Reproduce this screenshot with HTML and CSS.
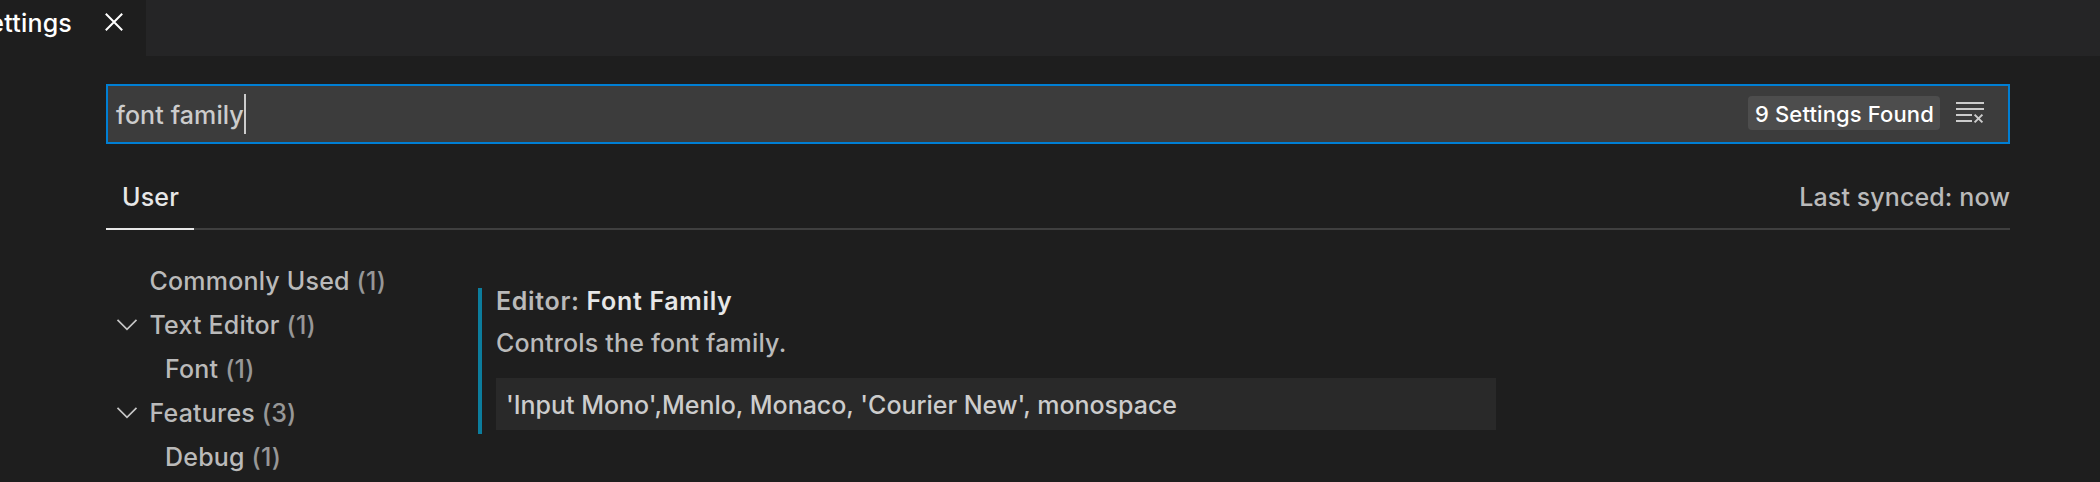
FILE: index.html
```
<!DOCTYPE html>
<html lang="en">
<head>
<meta charset="utf-8">
<title>Settings</title>
<link rel="stylesheet" href="styles.css">
</head>
<body>
<header class="tabs">
  <div class="tab">
    <span class="tab-label">Settings</span>
    <svg class="tab-close" width="20" height="20" viewBox="0 0 20 20"><path d="M1.8 1.8 18.2 18.2M18.2 1.8 1.8 18.2"/></svg>
  </div>
</header>
<main class="settings">
  <div class="search">
    <span class="query">font family</span>
    <span class="caret"></span>
    <span class="badge">9 Settings Found</span>
    <svg class="clear" width="28" height="22" viewBox="0 0 28 22"><path class="lines" d="M0 1H28M0 7H28M0 13H16M0 19H16"/><path class="cross" d="M18.6 12.6 26.4 20.4M26.4 12.6 18.6 20.4"/></svg>
  </div>
  <div class="scopes">
    <div class="scope">User</div>
    <div class="sync">Last synced: now</div>
  </div>
  <div class="content">
    <nav class="toc">
      <div class="row">Commonly Used <span class="count">(1)</span></div>
      <div class="row parent"><svg class="chevron" width="22" height="14" viewBox="0 0 22 14"><path d="M1.5 1.8 11 11.3 20.5 1.8"/></svg>Text Editor <span class="count">(1)</span></div>
      <div class="row child">Font <span class="count">(1)</span></div>
      <div class="row parent"><svg class="chevron" width="22" height="14" viewBox="0 0 22 14"><path d="M1.5 1.8 11 11.3 20.5 1.8"/></svg>Features <span class="count">(3)</span></div>
      <div class="row child">Debug <span class="count">(1)</span></div>
    </nav>
    <section class="setting">
      <h2 class="title"><span class="category">Editor: </span>Font Family</h2>
      <p class="description">Controls the font family.</p>
      <div class="value">'Input Mono',Menlo, Monaco, 'Courier New', monospace</div>
    </section>
  </div>
</main>
</body>
</html>
```
FILE: styles.css
```
* { box-sizing: border-box; }
body {
  margin: 0;
  height: 482px;
  overflow: hidden;
  background: #1e1e1e;
  color: #bababa;
  font: 450 25px/44px Inter, "Liberation Sans", sans-serif;
  letter-spacing: 0.2px;
  -webkit-font-smoothing: antialiased;
}
.tabs, .tab, .settings, .search, .scopes, .content, .setting { display: flex; }
.tabs { height: 56px; background: #252526; }
.tab {
  width: 146px;
  padding: 1px 22px 0 0;
  justify-content: flex-end;
  overflow: hidden;
  background: #1e1e1e;
  color: #fff;
}
.tab-label { flex: none; }
.tab-close { flex: none; margin: 11px 0 0 32px; fill: none; stroke: #fff; stroke-width: 2; }
.settings { flex-direction: column; padding: 28px 90px 0 106px; }
.search {
  height: 60px;
  padding: 0 24px 0 8px;
  border: 2px solid #007fd4;
  background: #3c3c3c;
  color: #ccc;
  align-items: flex-start;
}
.query { width: 127px; padding-top: 7px; letter-spacing: 0.1px; white-space: nowrap; }
.caret { width: 2px; height: 40px; margin: 8px auto 0 1px; background: #ccc; }
.badge {
  width: 192px;
  height: 34px;
  margin: 10px 16px 0 0;
  padding-left: 1px;
  border-radius: 4px;
  background: #4d4d4d;
  color: #fff;
  font-size: 22px;
  line-height: 36px;
  letter-spacing: 0.13px;
  text-align: center;
  white-space: nowrap;
}
.clear { margin-top: 16px; fill: none; stroke: #ccc; stroke-width: 2; }
.scopes {
  height: 62px;
  margin-top: 24px;
  justify-content: space-between;
  box-shadow: inset 0 -2px #3f3f3f;
}
.scopes, .content { flex: none; }
.scope {
  width: 88px;
  height: 62px;
  padding: 7px 0 0 16px;
  border-bottom: 2px solid #e7e7e7;
  color: #e7e7e7;
}
.sync { padding-top: 7px; letter-spacing: 0.1px; }
.content { padding-top: 29px; align-items: flex-start; }
.toc { width: 372px; padding-left: 10px; }
.row {
  display: flex;
  height: 44px;
  padding-left: 33.5px;
  align-items: center;
  white-space: pre;
}
.parent { padding-left: 0; }
.child { padding-left: 49px; }
.chevron { margin-right: 11.5px; fill: none; stroke: #c5c5c5; stroke-width: 1.7; }
.count { color: #979797; }
.setting {
  flex-direction: column;
  width: 1018px;
  height: 146px;
  margin-top: 29px;
  padding-left: 14px;
  border-left: 4px solid #0c7d9d;
}
.title {
  margin: 0;
  height: 26px;
  font-size: 25px;
  font-weight: 600;
  line-height: 26px;
  letter-spacing: 0.66px;
  color: #e7e7e7;
}
.category { color: #bababa; }
.description { margin: 7px 0 0; line-height: 44px; letter-spacing: 0.18px; }
.value {
  height: 52px;
  margin: 13px 0 0;
  padding-left: 10px;
  background: #292929;
  color: #ccc;
  line-height: 54px;
  letter-spacing: -0.02px;
}
```
